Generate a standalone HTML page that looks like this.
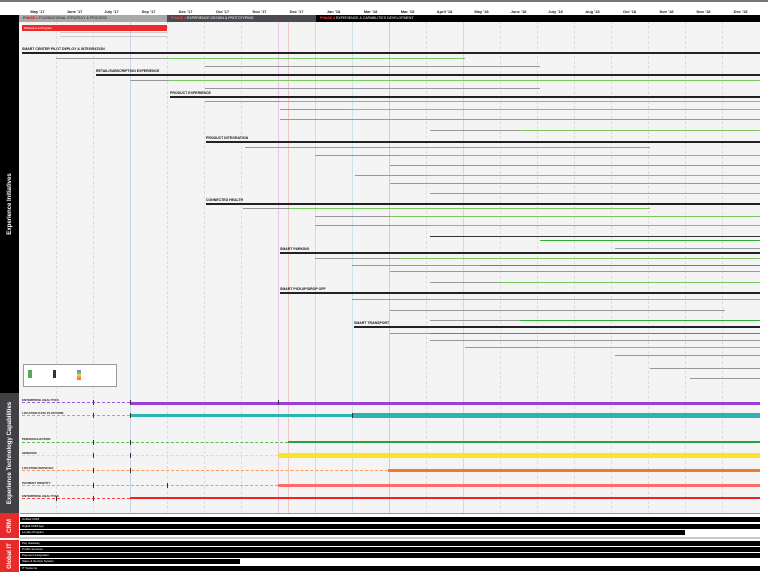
<!DOCTYPE html>
<html><head><meta charset="utf-8"><style>
*{margin:0;padding:0;box-sizing:border-box}
body{width:768px;height:572px;background:#fff;position:relative;overflow:hidden;font-family:"Liberation Sans",sans-serif}
div{position:absolute}
.m{top:9px;font-size:4px;font-weight:bold;color:#222;width:37px;text-align:center}
.v{top:16px;height:498px;width:0;border-left:1px dashed #ddd}
.h{height:2px;background:#222}
.ht{font-size:3.5px;font-weight:bold;color:#111}
.g{height:1px;background:#999}
.gr{height:1px;background:#7cc860}
.r{left:20px;right:8px;height:5px;background:#000}
.t{font-size:3px;color:#fff;left:22px}
.tl{left:22px;font-size:3px;font-weight:bold;color:#222}
.k{width:1px;height:5px;background:#333}
.side{left:0;width:19px;color:#fff;font-weight:bold;font-size:6px}
.side span{position:absolute;left:50%;top:50%;transform:translate(-50%,-50%) rotate(-90deg);white-space:nowrap}
</style></head><body>
<div style="left:0;top:0;width:768px;height:2px;background:#777"></div>
<div style="left:0;top:15px;width:760px;height:499px;background:#f4f4f4"></div>
<div class="m" style="left:19px">May '17</div><div class="m" style="left:56px">June '17</div><div class="m" style="left:93px">July '17</div><div class="m" style="left:130px">Sep '17</div><div class="m" style="left:167px">Dec '17</div><div class="m" style="left:204px">Oct '17</div><div class="m" style="left:241px">Nov '17</div><div class="m" style="left:278px">Dec '17</div><div class="m" style="left:315px">Jan '18</div><div class="m" style="left:352px">Mar '18</div><div class="m" style="left:389px">Mar '18</div><div class="m" style="left:426px">April '18</div><div class="m" style="left:463px">May '18</div><div class="m" style="left:500px">June '18</div><div class="m" style="left:537px">July '18</div><div class="m" style="left:574px">Aug '18</div><div class="m" style="left:611px">Oct '18</div><div class="m" style="left:648px">Nov '18</div><div class="m" style="left:685px">Nov '18</div><div class="m" style="left:722px">Dec '18</div>
<div class="v" style="left:56px"></div><div class="v" style="left:93px"></div><div class="v" style="left:130px;border-left:1px solid #c8d4ea"></div><div class="v" style="left:167px"></div><div class="v" style="left:204px"></div><div class="v" style="left:241px"></div><div class="v" style="left:278px;border-left:1px solid #e8c8e8"></div><div class="v" style="left:288px;border-left:1px solid #f0c8c8"></div><div class="v" style="left:315px;border-left:1px solid #d8d8f0"></div><div class="v" style="left:352px;border-left:1px solid #d0e0e8"></div><div class="v" style="left:389px;border-left:1px solid #f0c0c0"></div><div class="v" style="left:426px"></div><div class="v" style="left:463px;border-left:1px solid #cce0cc"></div><div class="v" style="left:500px"></div><div class="v" style="left:537px"></div><div class="v" style="left:574px"></div><div class="v" style="left:611px"></div><div class="v" style="left:648px"></div><div class="v" style="left:685px"></div><div class="v" style="left:722px"></div>
<div style="left:19px;top:15px;width:148px;height:7px;background:#a8a8a8;font-size:3.5px;color:#222;padding:1px 4px"><b style="color:#e00">PHASE 1</b> FOUNDATIONAL STRATEGY &amp; PROCESS</div>
<div style="left:167px;top:15px;width:149px;height:7px;background:#4a4a50;font-size:3.5px;color:#fff;padding:1px 4px"><b style="color:#f44">PHASE 2</b> EXPERIENCE DESIGN &amp; PROTOTYPING</div>
<div style="left:316px;top:15px;width:444px;height:7px;background:#000;font-size:3.5px;color:#fff;padding:1px 4px"><b style="color:#f44">PHASE 3</b> EXPERIENCE &amp; CAPABILITIES DEVELOPMENT</div>
<div style="left:22px;top:25px;width:145px;height:6px;background:#ee2a2a;font-size:3px;color:#fff;padding:1px 2px">Milestone &amp; Program</div>
<div style="left:60px;top:32px;width:107px;height:1px;background:#ccc"></div><div style="left:60px;top:36px;width:107px;height:1px;background:#ccc"></div>
<div class="side" style="top:15px;height:378px;background:#000"><span>Experience Initiatives</span></div>
<div class="side" style="top:393px;height:120px;background:#404045"><span>Experience Technology Capabilities</span></div>
<div class="side" style="top:513px;height:25px;background:#e82a2a"><span>CRM</span></div>
<div class="side" style="top:540px;height:32px;background:#e82a2a"><span>Global IT</span></div>
<div class="ht" style="left:22px;top:47px">SMART CENTER PILOT DEPLOY &amp; INTEGRATION</div><div class="h" style="left:22px;top:52px;width:738px"></div>
<div class="ht" style="left:96px;top:69px">RETAIL/SUBSCRIPTION EXPERIENCE</div><div class="h" style="left:96px;top:74px;width:664px"></div>
<div class="ht" style="left:170px;top:91px">PRODUCT EXPERIENCE</div><div class="h" style="left:170px;top:96px;width:590px"></div>
<div class="ht" style="left:206px;top:136px">PRODUCT INTEGRATION</div><div class="h" style="left:206px;top:141px;width:554px"></div>
<div class="ht" style="left:206px;top:198px">CONNECTED HEALTH</div><div class="h" style="left:206px;top:203px;width:554px"></div>
<div class="ht" style="left:280px;top:247px">SMART PARKING</div><div class="h" style="left:280px;top:252px;width:480px"></div>
<div class="ht" style="left:280px;top:287px">SMART PICKUP/DROP OFF</div><div class="h" style="left:280px;top:292px;width:480px"></div>
<div class="ht" style="left:354px;top:321px">SMART TRANSPORT</div><div class="h" style="left:354px;top:326px;width:406px"></div>
<div class="g" style="top:58px;left:56px;width:409px"></div><div class="gr" style="top:58px;left:168px;width:297px"></div>
<div class="g" style="top:66px;left:205px;width:335px"></div>
<div class="g" style="top:80px;left:130px;width:630px"></div><div class="gr" style="top:80px;left:170px;width:590px"></div>
<div class="g" style="top:88px;left:205px;width:335px"></div>
<div class="g" style="top:101px;left:205px;width:555px"></div><div class="gr" style="top:101px;left:280px;width:480px"></div>
<div class="g" style="top:109px;left:280px;width:480px"></div><div class="gr" style="top:109px;left:350px;width:410px"></div>
<div class="g" style="top:119px;left:280px;width:480px"></div>
<div class="g" style="top:130px;left:430px;width:330px"></div><div class="gr" style="top:130px;left:520px;width:240px"></div>
<div class="g" style="top:147px;left:245px;width:405px"></div>
<div class="g" style="top:155px;left:315px;width:445px"></div><div class="gr" style="top:155px;left:400px;width:360px"></div>
<div class="g" style="top:165px;left:390px;width:370px"></div>
<div class="g" style="top:175px;left:355px;width:405px"></div><div class="gr" style="top:175px;left:430px;width:330px"></div>
<div class="g" style="top:183px;left:390px;width:370px"></div>
<div class="g" style="top:193px;left:430px;width:330px"></div><div class="gr" style="top:193px;left:540px;width:220px"></div>
<div class="g" style="top:208px;left:243px;width:407px"></div><div class="gr" style="top:208px;left:290px;width:360px"></div>
<div class="g" style="top:216px;left:315px;width:445px"></div><div class="gr" style="top:216px;left:390px;width:370px"></div>
<div class="g" style="top:225px;left:315px;width:445px"></div><div class="gr" style="top:225px;left:430px;width:330px"></div>
<div class="g" style="top:236px;left:430px;width:330px;background:#333"></div>
<div class="gr" style="top:240px;left:540px;width:220px;background:#3a3"></div>
<div class="g" style="top:248px;left:615px;width:145px"></div>
<div class="g" style="top:258px;left:315px;width:445px"></div><div class="gr" style="top:258px;left:400px;width:360px"></div>
<div class="g" style="top:265px;left:352px;width:408px"></div><div class="gr" style="top:265px;left:480px;width:280px;background:#3a3"></div>
<div class="g" style="top:271px;left:390px;width:370px"></div>
<div class="g" style="top:282px;left:430px;width:330px"></div><div class="gr" style="top:282px;left:500px;width:260px"></div>
<div class="g" style="top:299px;left:352px;width:408px"></div><div class="gr" style="top:299px;left:430px;width:330px"></div>
<div class="g" style="top:310px;left:390px;width:335px"></div>
<div class="g" style="top:320px;left:430px;width:330px"></div><div class="gr" style="top:320px;left:520px;width:240px;background:#3a3"></div>
<div class="g" style="top:333px;left:390px;width:370px"></div><div class="gr" style="top:333px;left:430px;width:330px;background:#3a3"></div>
<div class="g" style="top:340px;left:430px;width:330px"></div>
<div class="g" style="top:347px;left:465px;width:295px"></div><div class="gr" style="top:347px;left:540px;width:220px"></div>
<div class="g" style="top:355px;left:615px;width:145px"></div>
<div class="g" style="top:368px;left:650px;width:110px"></div>
<div class="g" style="top:378px;left:690px;width:70px"></div>
<div style="left:23px;top:364px;width:94px;height:23px;border:1px solid #999;background:#fff"></div>
<div style="left:28px;top:370px;width:4px;height:8px;background:#5a5"></div><div style="left:53px;top:370px;width:3px;height:8px;background:#333"></div>
<div style="left:77px;top:370px;width:4px;height:10px;background:linear-gradient(#a6f,#3bb,#fd0,#f83,#f66)"></div>
<div class="tl" style="top:398px">ENTERPRISE ANALYTICS</div>
<div class="tl" style="top:411px">LOCATION DATA PLATFORM</div>
<div class="tl" style="top:437px">PERSONALIZATION</div>
<div class="tl" style="top:451px">SENSORS</div>
<div class="tl" style="top:466px">LOCATION SERVICES</div>
<div class="tl" style="top:481px">PAYMENT IDENTITY</div>
<div class="tl" style="top:494px">ENTERPRISE ANALYTICS</div>
<div style="left:22px;top:402px;width:108px;border-top:1px dashed #a5e"></div><div style="left:130px;top:402px;width:630px;height:3px;background:#9b3fd8"></div>
<div style="left:22px;top:415px;width:108px;border-top:1px dashed #5cc"></div><div style="left:130px;top:414px;width:222px;height:3px;background:#2bb5b0"></div><div style="left:352px;top:413px;width:408px;height:5px;background:#2bb5b0"></div>
<div style="left:22px;top:442px;width:266px;border-top:1px dashed #5b5"></div><div style="left:288px;top:441px;width:472px;height:2px;background:#2aa040"></div>
<div style="left:22px;top:455px;width:256px;border-top:1px dashed #ee4"></div><div style="left:278px;top:453px;width:482px;height:5px;background:#fde22a"></div>
<div style="left:22px;top:470px;width:366px;border-top:1px dashed #f95"></div><div style="left:388px;top:469px;width:372px;height:3px;background:#f07a30"></div>
<div style="left:22px;top:485px;width:256px;border-top:1px dashed #f88"></div><div style="left:278px;top:484px;width:482px;height:3px;background:#ff6a6a"></div>
<div style="left:22px;top:498px;width:108px;border-top:1px dashed #f44"></div><div style="left:130px;top:497px;width:630px;height:2px;background:#ee2222"></div>
<div class="k" style="left:93px;top:400px"></div><div class="k" style="left:130px;top:400px"></div><div class="k" style="left:278px;top:400px"></div>
<div class="k" style="left:93px;top:413px"></div><div class="k" style="left:130px;top:413px"></div><div class="k" style="left:352px;top:413px"></div>
<div class="k" style="left:93px;top:440px"></div><div class="k" style="left:130px;top:440px"></div><div class="k" style="left:93px;top:453px"></div><div class="k" style="left:130px;top:453px"></div>
<div class="k" style="left:93px;top:468px"></div><div class="k" style="left:130px;top:468px"></div><div class="k" style="left:93px;top:483px"></div><div class="k" style="left:167px;top:483px"></div>
<div class="k" style="left:56px;top:496px"></div><div class="k" style="left:93px;top:496px"></div>
<div style="left:20px;top:513px;width:740px;height:1px;background:#999"></div>
<div class="r" style="top:517px"></div><div class="t" style="top:517px">Unified CRM</div>
<div class="r" style="top:524px"></div><div class="t" style="top:524px">Digital CRM App</div>
<div class="r" style="top:530px;right:83px"></div><div class="t" style="top:530px">Loyalty Program</div>
<div style="left:20px;top:537px;width:740px;height:2px;background:#ccc"></div>
<div class="r" style="top:541px"></div><div class="t" style="top:541px">Pay Gateway</div>
<div class="r" style="top:547px"></div><div class="t" style="top:547px">Profile Services</div>
<div class="r" style="top:553px"></div><div class="t" style="top:553px">Payment Integration</div>
<div class="r" style="top:559px;right:528px"></div><div class="t" style="top:559px">Sales &amp; Service System</div>
<div class="r" style="top:566px"></div><div class="t" style="top:566px">IT Systems</div>
</body></html>
